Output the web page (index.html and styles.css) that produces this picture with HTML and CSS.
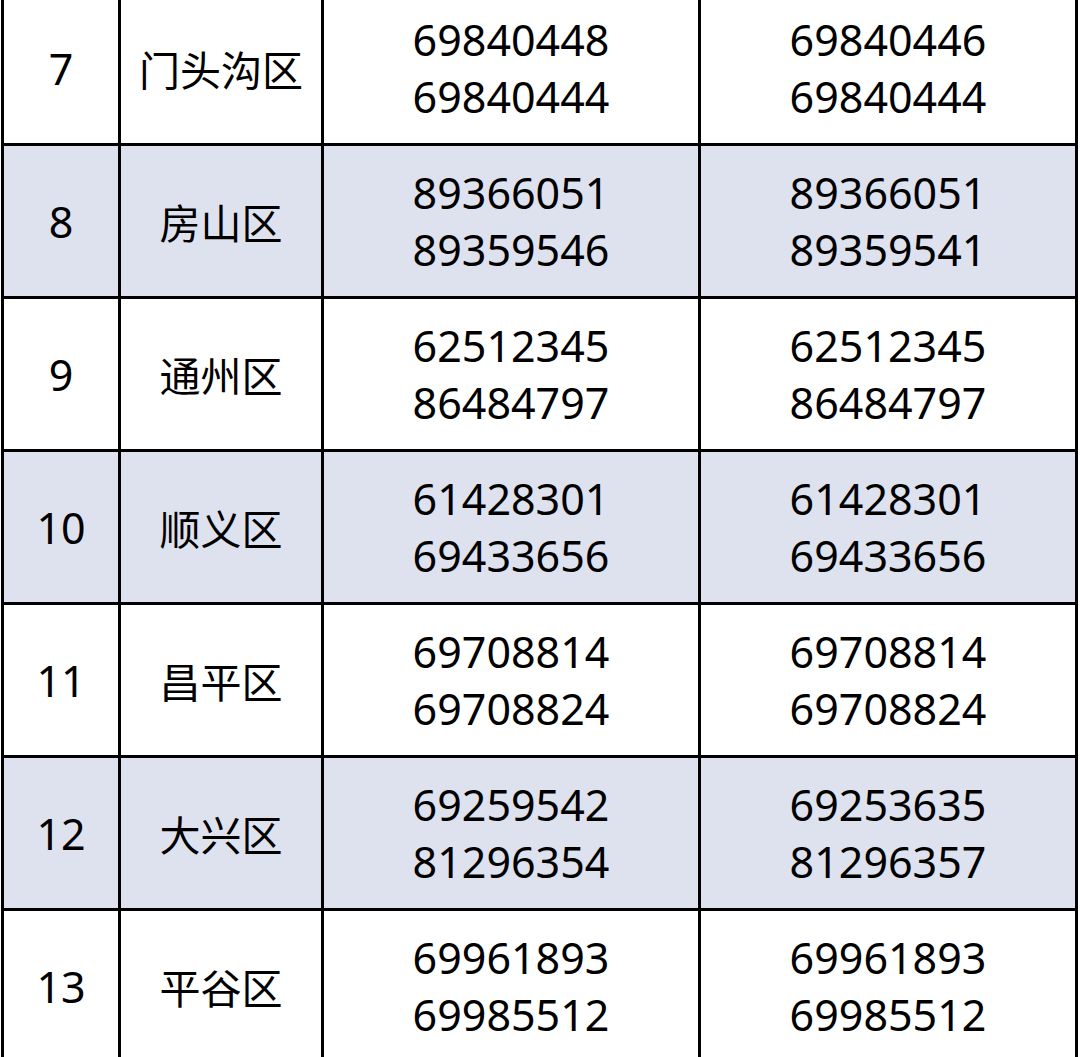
FILE: index.html
```html
<!DOCTYPE html>
<html lang="zh">
<head>
<meta charset="utf-8">
<link rel="stylesheet" href="styles.css">
</head>
<body>
<div class="wrap">
<table class="grid">
<colgroup><col class="c1"><col class="c2"><col class="c3"><col class="c4"></colgroup>
<tbody>
<tr><td>7</td><td>门头沟区</td><td>69840448<br>69840444</td><td>69840446<br>69840444</td></tr>
<tr class="alt"><td>8</td><td>房山区</td><td>89366051<br>89359546</td><td>89366051<br>89359541</td></tr>
<tr><td>9</td><td>通州区</td><td>62512345<br>86484797</td><td>62512345<br>86484797</td></tr>
<tr class="alt"><td>10</td><td>顺义区</td><td>61428301<br>69433656</td><td>61428301<br>69433656</td></tr>
<tr><td>11</td><td>昌平区</td><td>69708814<br>69708824</td><td>69708814<br>69708824</td></tr>
<tr class="alt"><td>12</td><td>大兴区</td><td>69259542<br>81296354</td><td>69253635<br>81296357</td></tr>
<tr><td>13</td><td>平谷区</td><td>69961893<br>69985512</td><td>69961893<br>69985512</td></tr>
</tbody>
</table>
</div>
</body>
</html>
```
FILE: styles.css
```css
html, body {
  margin: 0;
  padding: 0;
  background: #ffffff;
}
.wrap {
  width: 1080px;
  height: 1057px;
  overflow: hidden;
}
.grid {
  margin: -10px 0 0 1px;
  border-collapse: separate;
  border-spacing: 0;
  table-layout: fixed;
  width: 1077px;
  border-left: 3px solid #000;
  border-top: 3px solid #000;
  font-family: "Noto Sans", "Noto Sans CJK SC", sans-serif;
  font-size: 43px;
  line-height: 57px;
  color: #000;
}
.c1 { width: 117px; }
.c2 { width: 203px; }
.c3 { width: 377px; }
.c4 { width: 377px; }
.grid td {
  box-sizing: border-box;
  height: 153px;
  padding: 0;
  text-align: center;
  vertical-align: middle;
  border-right: 3px solid #000;
  border-bottom: 3px solid #000;
}
.grid td:nth-child(2) {
  font-family: "Noto Sans CJK SC", sans-serif;
  font-size: 41px;
}
.alt td {
  background: #dee2ef;
}
```
